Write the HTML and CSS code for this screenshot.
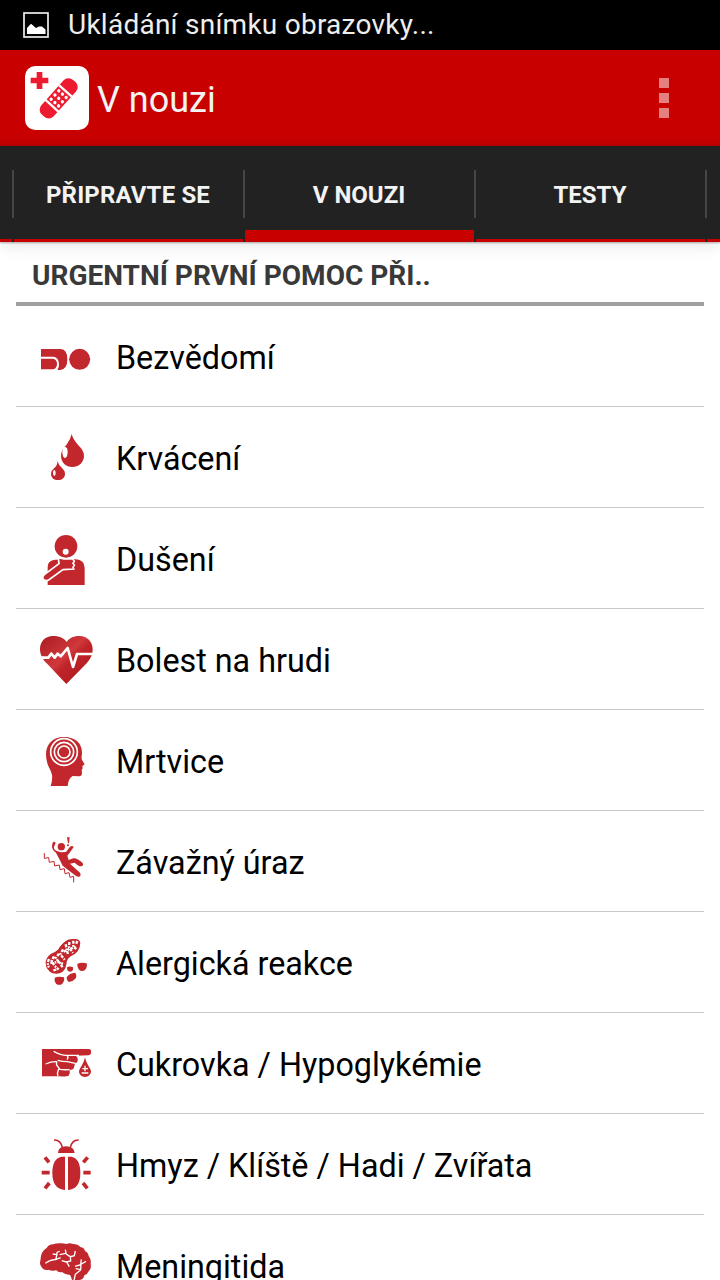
FILE: index.html
```html
<!DOCTYPE html>
<html lang="cs">
<head>
  <meta charset="UTF-8" />
  <meta name="viewport" content="width=device-width, initial-scale=1.0" />
  <title>V nouzi</title>
  <link rel="stylesheet" href="styles.css">
</head>
<body>
  <div class="status-bar">
    <svg class="status-icon" width="26" height="26" viewBox="0 0 26 26">
      <rect x="1" y="1" width="24" height="24" fill="none" stroke="#eee" stroke-width="1.7" />
      <path d="M4 22V16l4-4.300 5 4.300 3-1.500 3 0 3.500 3v4.500z" fill="#fff" />
    </svg>
    <span class="status-text">Ukládání snímku obrazovky...</span>
  </div>

  <header class="action-bar">
    <svg class="app-logo" width="64" height="64" viewBox="0 0 192 192">
      <rect width="192" height="192" rx="31" fill="#fff" />
      <path d="M35 18h17v17h18v17H52v17H35V52H17V35h18z" fill="#ed1b2f" />
      <g transform="translate(101 97) rotate(-48)">
        <rect x="-70" y="-25" width="140" height="50" rx="20" fill="#ed1b2f" />
        <path d="M-30-26v52M30-26v52" stroke="#fff" stroke-width="7" />
        <g fill="#fff">
          <circle cx="-17" cy="-15" r="5" /><circle cx="0" cy="-15" r="5" /><circle cx="17" cy="-15" r="5" />
          <circle cx="-17" cy="0" r="5" /><circle cx="0" cy="0" r="5" /><circle cx="17" cy="0" r="5" />
          <circle cx="-17" cy="15" r="5" /><circle cx="0" cy="15" r="5" /><circle cx="17" cy="15" r="5" />
        </g>
      </g>
    </svg>
    <h1 class="title">V nouzi</h1>
    <div class="overflow"><i></i><i></i><i></i></div>
  </header>

  <nav class="tabs">
    <div class="tab"></div>
    <div class="tab wide">PŘIPRAVTE SE</div>
    <div class="tab active">V NOUZI</div>
    <div class="tab">TESTY</div>
    <div class="tab"></div>
  </nav>

  <main class="content">
    <h2 class="section">URGENTNÍ PRVNÍ POMOC PŘI..</h2>
    <ul class="list">
      <li class="row">
        <svg class="icon" viewBox="0 -27 210 210">
          <path d="M33 57h59q20 1 20 31t-21 32H82q6-8 5-18-1-20-16-22H33z" />
          <path d="M33 86h35q13 1 13 17-1 15-14 15H33z" />
          <circle cx="149" cy="88" r="31.500" />
        </svg>
        <span>Bezvědomí</span>
      </li>
      <li class="row">
        <svg class="icon" viewBox="0 -9 210 210">
          <path d="M125 27q4 16 20 34 17 16 17 31c0 20-16 34-35 34S93 112 93 92q0-16 16-32 13-17 16-33z" />
          <path d="M82 108q4 13 14 21 9 8 9 17c0 12-9 19-21 19s-21-7-21-19q0-9 10-17t9-21z" />
          <ellipse class="w" cx="105" cy="82" rx="8" ry="17" />
          <ellipse class="w" cx="73" cy="144" rx="4" ry="9" />
        </svg>
        <span>Krvácení</span>
      </li>
      <li class="row">
        <svg class="icon" viewBox="0 -6 210 210">
          <circle cx="108" cy="64" r="34" />
          <circle class="w" cx="107" cy="80" r="9" />
          <path d="M53 180V125q0-18 22-21l62-1q27 2 27 26v51z" />
          <path class="arm" d="M85 98l16 4h27l5 7-4 6 4 6-4 6 2 5-32 2-43 31q-9 4-16-2-5-8 3-14l44-33z" />
        </svg>
        <span>Dušení</span>
      </li>
      <li class="row">
        <svg class="icon" viewBox="0 -3 210 210">
          <defs>
            <linearGradient id="heart" x1="0" y1="0" x2="1" y2="1">
              <stop offset="0" stop-color="#a91c20" />
              <stop offset=".45" stop-color="#d0383b" />
              <stop offset=".55" stop-color="#bf2429" />
              <stop offset="1" stop-color="#a9171d" />
            </linearGradient>
          </defs>
          <path fill="url(#heart)" d="M110 51c8-13 23-18 39-18 22 0 39 17 39 40 0 17-8 31-18 42l-61 62-59-62C39 104 30 90 30 72c0-23 17-39 39-39 16 0 33 5 41 18z" />
          <path class="pulse" d="M29 98h26l9-12 10 12 9-12 9 8 21-25 16 57 12-39h50" />
        </svg>
        <span>Bolest na hrudi</span>
      </li>
      <li class="row">
        <svg class="icon" viewBox="0 0 210 210">
          <path d="M102 36c34 0 54 19 54 47 0 10-3 15 0 22l8 13-7 5 1 7-3 5 1 8q0 10-8 11l-20-1q-13 7-15 30H62q6-19 4-33-2-11-10-25-8-16-8-37c0-30 20-52 54-52z" />
          <g fill="none" stroke="#fff" stroke-width="5">
            <circle cx="102" cy="81" r="18" />
            <circle cx="102" cy="81" r="29" />
            <circle cx="102" cy="81" r="40" />
          </g>
        </svg>
        <span>Mrtvice</span>
      </li>
      <li class="row">
        <svg class="icon" viewBox="0 3 210 210">
          <circle cx="94" cy="65" r="11" />
          <path d="M68 53q5-6 9 1l-5 11q-1 9 8 13l13 4 15-1 12-16q7-5 11 1l-12 17-7 9 4 13 14-5q12-1 28 14 4 8-4 10-9 0-20-11l-14 3 30 27q5 9-3 12-7 1-13-5l-36-28-10-20-11-20q-11-7-11-20z" />
          <path d="M111 37h8l-2 18h-3z" />
          <circle cx="114" cy="61" r="3" />
          <path fill="none" stroke="#c1272d" stroke-width="3" d="M43 84v16l13-2 2 14 14-3 2 14 14-3 2 14 13-3 2 15 12-3 3 14 11-3v18" />
        </svg>
        <span>Závažný úraz</span>
      </li>
      <li class="row">
        <svg class="icon" viewBox="0 6 210 210">
          <path d="M112 45q9-4 24-3 13 1 15 11 0 14-8 26-8 11-21 15-9 6-12 17-1 20-13 30-12 8-29 4-20-9-21-30 0-17 15-28 13-5 22-13 10-18 28-29z" />
          <path class="shell" d="M57 102q-7 15 0 25M72 94l-7 13 8 15 13 12M87 86l-10 13 14 16 7 13M99 73l-8 15 13 16M107 58l3 15 4 15M118 51l-1 16 12 17M130 47v18l9 7M142 48l-5 12M61 114l23-3 18 6M101 80l17-8 21-7M70 136l14-3" />
          <path d="M111 127q8-5 18 0 2 8-4 12-8 4-13-3zM142 116q14-5 28-1 3 11-5 20-10 6-18-1-6-7-5-18zM74 158q13-5 28-1 3 10-5 19-9 7-19 0-6-8-4-18zM110 157q8-13 26-14 6 11 0 18-8 9-19 10-7-3-7-14z" />
        </svg>
        <span>Alergická reakce</span>
      </li>
      <li class="row">
        <svg class="icon" viewBox="0 -6 210 210">
          <path d="M36 57h142q7 2 5 13-2 6-7 6l-39 1q8 5 6 15-1 7-8 8-2 12-5 17-6 3-11 3 2 9-3 17-5 3-29 2H36z" />
          <path class="line" d="M71 64q23 13 41 12h35M111 76q6 6 0 13M47 102q18-8 34-7M83 91q14 4 29 4l24 5M81 95q-4 8 1 13l8 10q10 2 29 1M87 116q-7 13-3 22" />
          <path d="M165 82q2 13 10 25 8 11 8 17c0 10-8 17-18 17s-18-7-18-17q0-6 8-17 8-12 10-25z" />
          <path class="line" d="M157 116h17M165 107v17M155 129h20" />
        </svg>
        <span>Cukrovka / Hypoglykémie</span>
      </li>
      <li class="row">
        <svg class="icon" viewBox="0 -3 210 210">
          <path d="M84 69q1-20 24-20 24 0 26 20zM105 80v100q-38-3-38-51 0-43 27-49zM114 80h11q26 6 26 49 0 48-37 51z" />
          <path fill="none" stroke="#c1272d" stroke-width="5" d="M72 30q20-1 25 23M146 30q-20-1-25 23" />
          <path fill="none" stroke="#c1272d" stroke-width="11" d="M45 82l12 15M173 82l-13 15M35 128h24M160 128h22M45 175l13-16M172 175l-13-16" />
        </svg>
        <span>Hmyz / Klíště / Hadi / Zvířata</span>
      </li>
      <li class="row">
        <svg class="icon" viewBox="0 300 210 210">
          <path d="M50 354q5-10 20-11 6-3 20-3 9-1 19 2 10-4 20 0 15 0 22 9 12 2 14 12 10 5 11 15 8 9 6 24 3 16-6 22-4 10-13 12-2 12-14 14l-6 15h-18q4-17-5-30-14 0-24-9-10 3-17-5-14 3-24-2-13 3-19-6-9-10-5-20 1-30 19-39z" />
          <path class="line" d="M46 400q15-12 31-11l4-16q-2-8 8-9M78 388l14-5M80 374l-12-2M106 359l2 11-19 4M108 372l13 8 12-3 3-14M121 378l1 15-13 3-14-4M110 396l8 14M154 388l-2 16-17 5M153 403l-1 17-16 13-4 18M152 419l-15-3M154 402l14-8" />
        </svg>
        <span>Meningitida</span>
      </li>
    </ul>
  </main>
</body>
</html>
```
FILE: styles.css
```css
* {
  box-sizing: border-box;
}
body {
  margin: 0;
  height: 1280px;
  overflow: hidden;
  background: white;
  color: #000;
  font-family: Roboto, sans-serif;
}
h1, h2, ul {
  margin: 0;
  padding: 0;
}
.status-bar {
  display: flex;
  align-items: center;
  height: 50px;
  padding-left: 23px;
  background: #000;
}
.status-text {
  margin-left: 19px;
  padding-bottom: 2px;
  color: #eee;
  font-size: 28px;
  letter-spacing: .25px;
}
.action-bar {
  display: flex;
  align-items: center;
  height: 96px;
  padding: 0 51px 0 25px;
  background: linear-gradient(#c80000 92px, #be0000);
}
.title {
  flex: 1;
  margin-left: 8px;
  padding-top: 4px;
  color: #f3f3f3;
  font-size: 36px;
  font-weight: normal;
}
.overflow {
  display: grid;
  gap: 5px;
}
.overflow i {
  width: 10px;
  height: 10px;
  background: #e48080;
}
.tabs {
  display: grid;
  grid-template-columns: 12px 229px 229px 229px 13px;
  gap: 2px;
  height: 96px;
  background: linear-gradient(#222 24px, #464646 24px 72px, #222 72px);
  box-shadow: 0 1px 2px rgba(0, 0, 0, .3), 0 3px 16px rgba(0, 0, 0, .1);
}
.tab {
  display: flex;
  align-items: center;
  justify-content: center;
  padding: 4px 1px 0 0;
  background: #222;
  border-bottom: 3px solid #c80000;
  color: #f3f3f3;
  font-size: 24px;
  font-weight: bold;
}
.tab.wide {
  letter-spacing: .15px;
}
.tab.active {
  padding-top: 13px;
  border-bottom-width: 12px;
}
.section {
  height: 64px;
  margin: 0 16px;
  padding: 20px 16px 0;
  border-bottom: 4px solid #a0a0a0;
  color: #393939;
  font-size: 28px;
  line-height: 28px;
}
.list {
  list-style: none;
}
.row {
  display: flex;
  align-items: center;
  height: 101px;
  margin: 0 16px;
  padding-left: 14px;
  border-bottom: 1px solid #c8c8c8;
  font-size: 32.3px;
}
.row span {
  margin-left: 16px;
  padding-top: 3px;
  white-space: nowrap;
}
.icon {
  width: 70px;
  height: 70px;
  fill: #c1272d;
}
.icon .w {
  fill: white;
}
.icon .line,
.icon .pulse,
.icon .shell {
  fill: none;
  stroke: white;
  stroke-width: 4;
}
.icon .pulse {
  stroke-width: 8;
  stroke-linejoin: round;
}
.icon .shell {
  stroke-width: 7;
  stroke-dasharray: 9 4 5 3;
}
.icon .arm {
  stroke: white;
  stroke-width: 5;
}
```
